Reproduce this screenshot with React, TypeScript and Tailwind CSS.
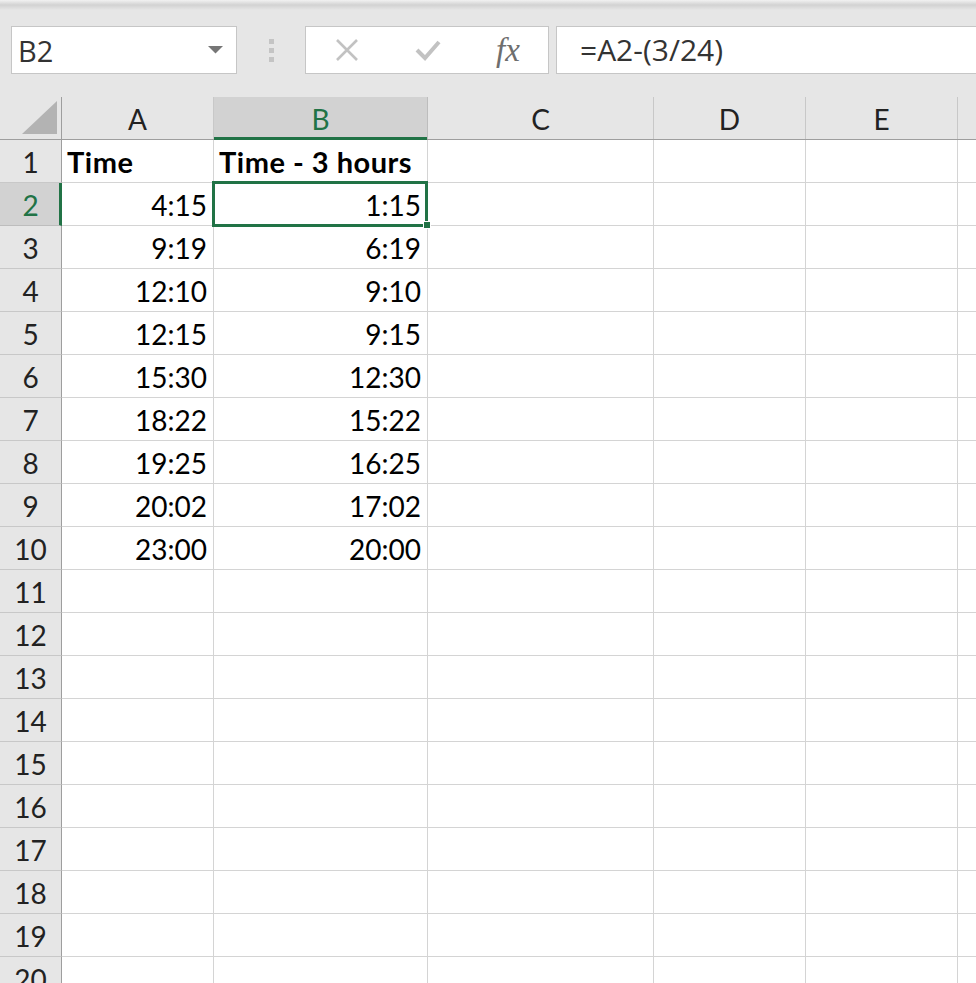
import React from 'react';

// Column widths (px) after the row-header column
const COLS = [
  { key: 'A', width: 152 },
  { key: 'B', width: 214 },
  { key: 'C', width: 226 },
  { key: 'D', width: 152 },
  { key: 'E', width: 152 },
  { key: '', width: 80 },
];

const DATA: Record<number, [string, string]> = {
  1: ['Time', 'Time - 3 hours'],
  2: ['4:15', '1:15'],
  3: ['9:19', '6:19'],
  4: ['12:10', '9:10'],
  5: ['12:15', '9:15'],
  6: ['15:30', '12:30'],
  7: ['18:22', '15:22'],
  8: ['19:25', '16:25'],
  9: ['20:02', '17:02'],
  10: ['23:00', '20:00'],
};

const ROWS = Array.from({ length: 20 }, (_, i) => i + 1);

const cellFont = { fontFamily: 'Lato, "Open Sans", sans-serif' };
const uiFont = { fontFamily: '"Open Sans", "Noto Sans", sans-serif' };

function FormulaBar() {
  return (
    <div className="relative h-[97px] bg-[#e6e6e6]">
      <div className="absolute inset-x-0 top-0 h-[10px] bg-gradient-to-b from-[#f2f2f2] via-[#d2d2d2] to-[#e6e6e6]" />
      <div className="relative flex items-start pt-[26px]" style={uiFont}>
        {/* Name box */}
        <div className="ml-[11px] flex h-[48px] w-[226px] shrink-0 items-center justify-between border border-[#c6c6c6] bg-white pl-[6px] pr-[13px]">
          <span className="text-[29px] leading-none text-[#333]">B2</span>
          <svg width="15" height="8" viewBox="0 0 15 8">
            <path d="M0 0 L15 0 L7.5 7.5 Z" fill="#767676" />
          </svg>
        </div>
        {/* Separator */}
        <div className="flex h-[48px] w-[68px] shrink-0 flex-col items-center justify-center gap-[4px]">
          <span className="block h-[5px] w-[5px] bg-[#c4c4c4]" />
          <span className="block h-[5px] w-[5px] bg-[#c4c4c4]" />
          <span className="block h-[5px] w-[5px] bg-[#c4c4c4]" />
        </div>
        {/* Cancel / Enter / Function */}
        <div className="flex h-[48px] w-[244px] shrink-0 items-center border border-[#c6c6c6] bg-white">
          <div className="flex w-[82px] justify-center">
            <svg width="24" height="24" viewBox="0 0 24 24">
              <path d="M2 2 L22 22 M22 2 L2 22" stroke="#c2c2c2" strokeWidth="2.6" />
            </svg>
          </div>
          <div className="flex w-[80px] justify-center">
            <svg width="28" height="24" viewBox="0 0 28 24">
              <path d="M3 12 L11 20 L25 4" stroke="#c2c2c2" strokeWidth="4" fill="none" />
            </svg>
          </div>
          <div className="flex w-[80px] justify-center">
            <span
              className="text-[33px] italic leading-none text-[#6e6e6e]"
              style={{ fontFamily: '"Liberation Serif", "DejaVu Serif", serif' }}
            >
              fx
            </span>
          </div>
        </div>
        {/* Formula */}
        <div className="ml-[7px] flex h-[48px] w-[440px] shrink-0 items-center border border-[#c6c6c6] bg-white pl-[23px]">
          <span className="text-[30px] leading-none text-[#333]">=A2-(3/24)</span>
        </div>
      </div>
    </div>
  );
}

function HeaderRow() {
  return (
    <div className="flex h-[43px] border-b border-[#9e9e9e] bg-[#e6e6e6]">
      <div className="relative w-[62px] shrink-0 border-r border-[#9e9e9e]">
        <svg className="absolute bottom-[5px] right-[4px]" width="35" height="33" viewBox="0 0 35 33">
          <path d="M35 0 L35 33 L0 33 Z" fill="#b3b3b3" />
        </svg>
      </div>
      {COLS.map((c, i) => {
        const selected = c.key === 'B';
        return (
          <div
            key={i}
            style={{ width: c.width, ...cellFont }}
            className={
              selected
                ? 'relative flex shrink-0 items-end justify-center border-r border-[#bdbdbd] bg-[#d2d2d2] pb-[6px] text-[28px] leading-none text-[#217346]'
                : 'flex shrink-0 items-end justify-center border-r border-[#c8c8c8] pb-[6px] text-[28px] leading-none text-[#222]'
            }
          >
            {c.key}
            {selected && <span className="absolute inset-x-0 bottom-[-1px] h-[3px] bg-[#217346]" />}
          </div>
        );
      })}
    </div>
  );
}

function DataRow({ n }: { n: number }) {
  const data = DATA[n];
  const bold = n === 1;
  const active = n === 2;
  return (
    <div className="flex h-[43px] shrink-0" style={cellFont}>
      <div
        className={
          active
            ? 'relative flex w-[62px] shrink-0 items-center justify-center border-b border-r-[3px] border-b-[#bdbdbd] border-r-[#217346] bg-[#d2d2d2] pl-[2px] pt-[1px] text-[28px] text-[#217346]'
            : 'flex w-[62px] shrink-0 items-center justify-center border-b border-r border-b-[#c8c8c8] border-r-[#9e9e9e] bg-[#e6e6e6] pt-[1px] text-[28px] text-[#222]'
        }
      >
        {n}
      </div>
      {COLS.map((c, i) => {
        const text = data && i < 2 ? data[i] : '';
        return (
          <div
            key={i}
            style={{ width: c.width }}
            className={
              bold
                ? 'flex shrink-0 items-center justify-start overflow-hidden whitespace-nowrap border-b border-r border-[#d4d4d4] bg-white pl-[5px] pt-[2px] text-[29px] font-bold tracking-[0.5px] text-black'
                : 'flex shrink-0 items-center justify-end overflow-hidden whitespace-nowrap border-b border-r border-[#d4d4d4] bg-white pr-[6px] pt-[2px] text-[28px] text-black'
            }
          >
            {text}
          </div>
        );
      })}
    </div>
  );
}

export default function App() {
  return (
    <div className="relative h-[983px] w-[976px] overflow-hidden bg-white">
      <FormulaBar />
      <div className="relative">
        <HeaderRow />
        {ROWS.map((n) => (
          <DataRow key={n} n={n} />
        ))}
        {/* Active cell selection B2 */}
        <div className="pointer-events-none absolute left-[212px] top-[84px] h-[46px] w-[216px] border-[3px] border-[#217346]" />
        <div className="pointer-events-none absolute left-[423px] top-[124px] h-[8px] w-[8px] border border-white bg-[#217346]" />
      </div>
    </div>
  );
}
